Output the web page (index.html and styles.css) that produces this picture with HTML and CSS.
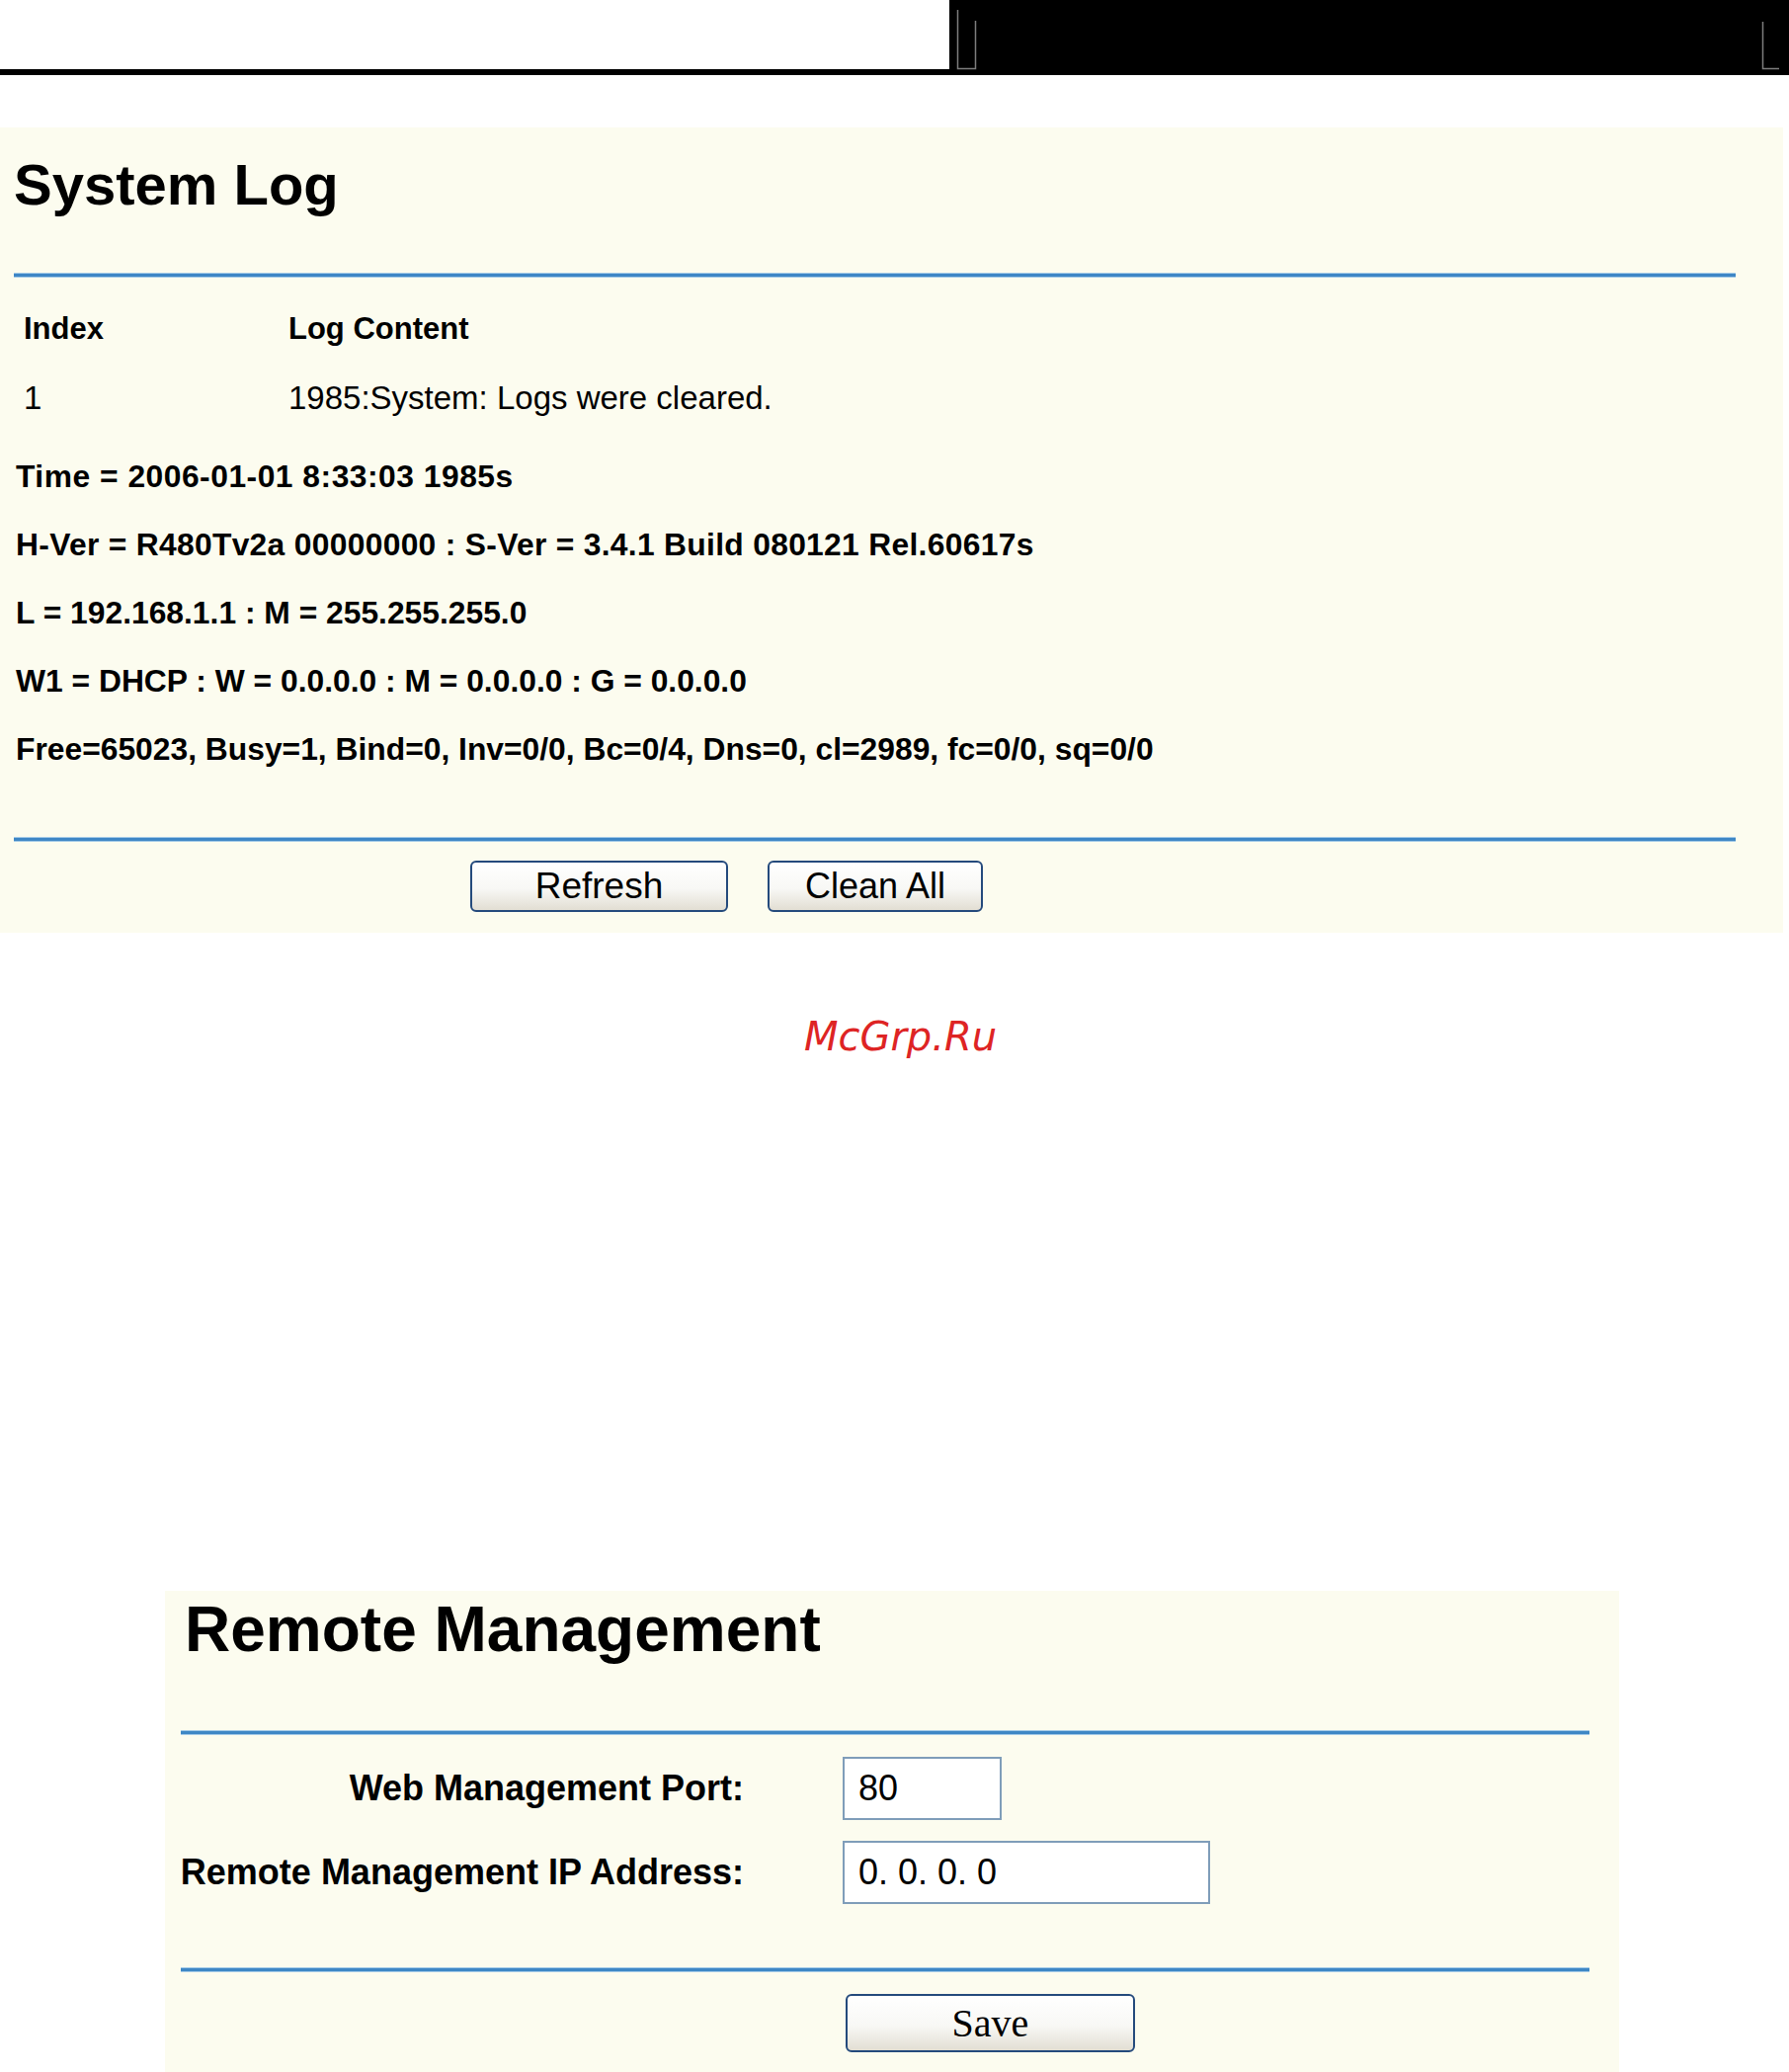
FILE: index.html
```html
<!DOCTYPE html>
<html lang="en">
<head>
    <meta charset="UTF-8">
    <meta name="viewport" content="width=device-width, initial-scale=1.0">
    <title>System Log / Remote Management</title>
    <link rel="stylesheet" href="styles.css">
</head>
<body>

    <div class="topbar">
        <div class="topbar-left"></div>
        <div class="topbar-right">
            <svg class="topbar-marks" width="850" height="76" viewBox="0 0 850 76">
                <path d="M8.5 10 V69.5 H26.5 V21" fill="none" stroke="#7d7d7d" stroke-width="1.5"/>
                <path d="M823.5 22 V69.5 H840" fill="none" stroke="#7d7d7d" stroke-width="1.5"/>
            </svg>
        </div>
    </div>

    <section class="panel panel-log">
        <h1 class="title">System Log</h1>
        <div class="rule"></div>
        <table class="log-table">
            <tr>
                <th class="col-index">Index</th>
                <th>Log Content</th>
            </tr>
            <tr>
                <td class="col-index">1</td>
                <td>1985:System: Logs were cleared.</td>
            </tr>
        </table>
        <div class="info">
            <p class="wide">Time = 2006-01-01 8:33:03 1985s</p>
            <p class="semi-wide">H-Ver = R480Tv2a 00000000 : S-Ver = 3.4.1 Build 080121 Rel.60617s</p>
            <p>L = 192.168.1.1 : M = 255.255.255.0</p>
            <p>W1 = DHCP : W = 0.0.0.0 : M = 0.0.0.0 : G = 0.0.0.0</p>
            <p>Free=65023, Busy=1, Bind=0, Inv=0/0, Bc=0/4, Dns=0, cl=2989, fc=0/0, sq=0/0</p>
        </div>
        <div class="rule rule-bottom"></div>
        <div class="button-row">
            <button class="btn btn-refresh">Refresh</button>
            <button class="btn btn-clean">Clean All</button>
        </div>
    </section>

    <div class="watermark">McGrp.Ru</div>

    <section class="panel panel-remote">
        <h1 class="title title-remote">Remote Management</h1>
        <div class="rule"></div>
        <div class="form-grid">
            <label class="form-label" for="port">Web Management Port:</label>
            <input class="field field-port" id="port" type="text" value="80">
            <label class="form-label" for="ip">Remote Management IP Address:</label>
            <input class="field field-ip" id="ip" type="text" value="0. 0. 0. 0">
        </div>
        <div class="rule rule-save"></div>
        <button class="btn btn-save">Save</button>
    </section>

</body>
</html>
```

FILE: styles.css
```css
body {
    margin: 0;
    background: #ffffff;
    font-family: "Liberation Sans", Arial, sans-serif;
    color: #000000;
}
.topbar {
    display: flex;
    height: 76px;
}
.topbar-left {
    width: 961px;
    border-bottom: 6px solid #000000;
    box-sizing: border-box;
}
.topbar-right {
    flex: 1;
    background: #000000;
}
.topbar-marks {
    display: block;
}
.panel {
    background-color: #fcfcef;
    box-sizing: border-box;
}
.panel-log {
    margin-top: 53px;
    width: 1805px;
    padding: 28px 48px 21px 14px;
}
.title {
    margin: 0 0 60px 0;
    font-size: 58px;
    line-height: 59px;
    font-weight: bold;
}
.rule {
    height: 3px;
    background-color: #3e87c5;
    border-top: 1px solid #a3cae7;
    border-bottom: 1px solid #a3cae7;
}
.log-table {
    margin-top: 17px;
    border-collapse: collapse;
}
.log-table th,
.log-table td {
    padding: 0;
    text-align: left;
    line-height: 70px;
    vertical-align: top;
    white-space: nowrap;
}
.log-table th {
    font-size: 31px;
    font-weight: bold;
}
.log-table td {
    font-size: 33px;
    font-weight: normal;
}
.log-table .col-index {
    width: 268px;
    padding-left: 10px;
}
.info {
    margin-top: 10px;
    padding-left: 2px;
}
.info p {
    margin: 0;
    font-size: 31.8px;
    line-height: 69px;
    font-weight: bold;
    white-space: nowrap;
}
.info .wide {
    letter-spacing: 0.5px;
}
.info .semi-wide {
    letter-spacing: 0.3px;
}
.rule-bottom {
    margin-top: 54px;
}
.button-row {
    display: flex;
    gap: 40px;
    margin-top: 19px;
    padding-left: 462px;
}
.btn {
    height: 52px;
    padding: 0;
    font-family: "Liberation Sans", Arial, sans-serif;
    font-size: 36px;
    color: #000000;
    border: 2px solid #244a7c;
    border-radius: 6px;
    background: linear-gradient(#ffffff 0%, #f8f8f5 55%, #e2ded3 100%);
    box-sizing: border-box;
    cursor: pointer;
}
.btn-refresh {
    width: 261px;
    font-size: 37px;
}
.btn-clean {
    width: 218px;
}
.watermark {
    margin-top: 85px;
    padding-left: 12px;
    text-align: center;
    font-family: "DejaVu Sans", sans-serif;
    font-style: italic;
    font-size: 40px;
    line-height: 40px;
    color: #de2424;
}
.panel-remote {
    margin-top: 541px;
    margin-left: 167px;
    width: 1472px;
    padding: 7px 30px 20px 16px;
}
.title-remote {
    margin: 0 0 69px 4px;
    font-size: 64px;
    line-height: 65px;
}
.form-grid {
    display: grid;
    grid-template-columns: 574px auto;
    column-gap: 100px;
    row-gap: 21px;
    align-items: center;
    margin-top: 22px;
    margin-left: -4px;
}
.form-label {
    text-align: right;
    font-size: 36px;
    font-weight: bold;
    white-space: nowrap;
}
.field {
    justify-self: start;
    height: 64px;
    padding: 0 14px;
    border: 2px solid #7f9db9;
    background: #ffffff;
    font-family: "Liberation Sans", Arial, sans-serif;
    font-size: 36px;
    color: #000000;
    box-sizing: border-box;
    outline: none;
}
.field-port {
    width: 161px;
}
.field-ip {
    width: 372px;
}
.rule-save {
    margin-top: 64px;
}
.btn-save {
    display: block;
    margin-top: 22px;
    margin-left: 673px;
    width: 293px;
    height: 59px;
    font-family: "Liberation Serif", "Times New Roman", serif;
    font-size: 40px;
}
```
